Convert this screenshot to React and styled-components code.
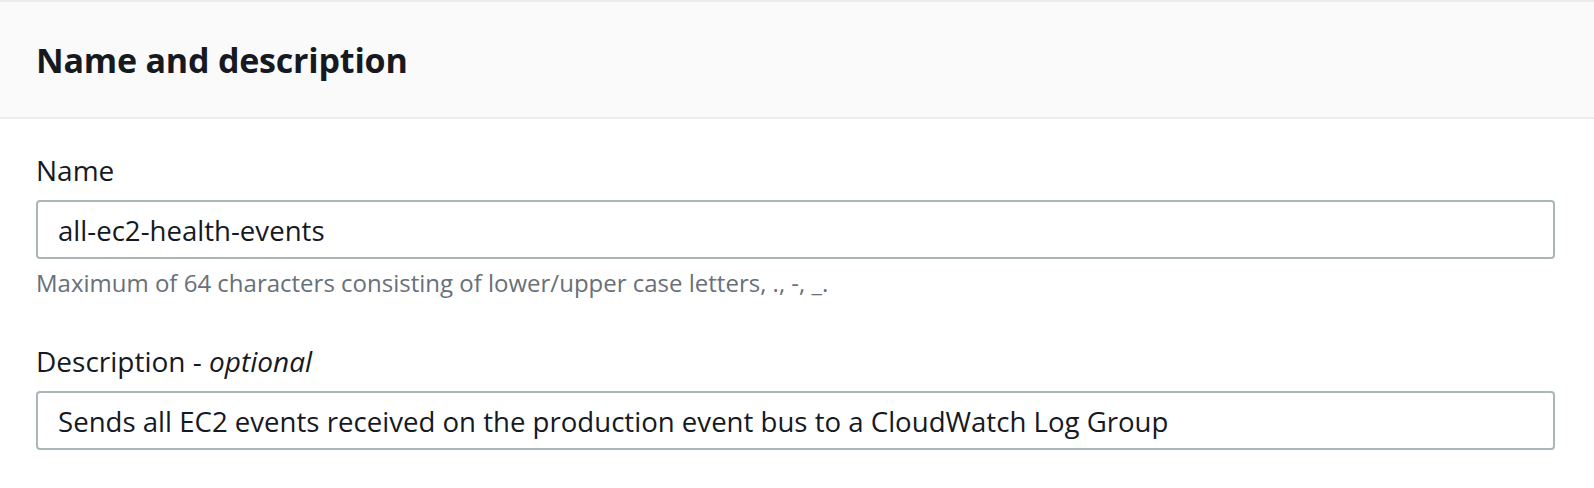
import React from 'react'
import styled, { createGlobalStyle } from 'styled-components'

const GlobalStyle = createGlobalStyle`
  html, body {
    margin: 0;
    padding: 0;
    background: #ffffff;
  }
  body {
    font-family: "Open Sans", "Noto Sans", sans-serif;
    color: #16191f;
  }
`

const Panel = styled.section`
  background: #ffffff;
  border-top: 2px solid #eaeded;
`

const Header = styled.header`
  background: #fafafa;
  border-bottom: 2px solid #eaeded;
  height: 115px;
  display: flex;
  align-items: center;
  padding: 0 36px;
`

const Title = styled.h2`
  margin: 0;
  font-size: 34px;
  font-weight: 700;
  letter-spacing: -0.2px;
  color: #16191f;
`

const Body = styled.div`
  padding: 33px 39px 0 36px;
  display: flex;
  flex-direction: column;
  gap: 44px;
`

const Field = styled.div`
  display: flex;
  flex-direction: column;
`

const Label = styled.label`
  font-size: 28px;
  line-height: 36px;
  color: #16191f;
  margin-bottom: 12px;

  em {
    font-style: italic;
  }
`

const Input = styled.input`
  box-sizing: border-box;
  width: 100%;
  height: 59px;
  border: 2px solid #aab7b8;
  border-radius: 4px;
  padding: 0 20px;
  font-family: inherit;
  font-size: 27.6px;
  color: #16191f;
  background: #ffffff;
  outline: none;
`

const Hint = styled.div`
  font-size: 24px;
  line-height: 32px;
  color: #687078;
  margin-top: 8px;
`

export default function App() {
  return (
    <>
      <GlobalStyle />
      <Panel>
        <Header>
          <Title>Name and description</Title>
        </Header>
        <Body>
          <Field>
            <Label>Name</Label>
            <Input defaultValue="all-ec2-health-events" />
            <Hint>Maximum of 64 characters consisting of lower/upper case letters, ., -, _.</Hint>
          </Field>
          <Field>
            <Label>
              Description - <em>optional</em>
            </Label>
            <Input defaultValue="Sends all EC2 events received on the production event bus to a CloudWatch Log Group" />
          </Field>
        </Body>
      </Panel>
    </>
  )
}
